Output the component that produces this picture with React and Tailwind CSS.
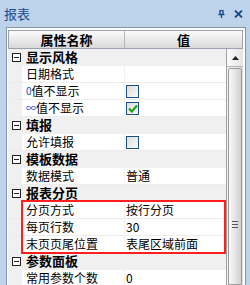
const rows = [
  { cat: '显示风格' },
  { name: '日期格式', value: '' },
  { name: '值不显示', prefix: '0', check: false },
  { name: '值不显示', prefix: '∞', check: true },
  { cat: '填报' },
  { name: '允许填报', check: false },
  { cat: '模板数据' },
  { name: '数据模式', value: '普通' },
  { cat: '报表分页' },
]

const paging = [
  { name: '分页方式', value: '按行分页' },
  { name: '每页行数', value: '30' },
  { name: '末页页尾位置', value: '表尾区域前面' },
]

const tail = [
  { cat: '参数面板' },
  { name: '常用参数个数', value: '0' },
]

function Expander() {
  return (
    <span className="w-[9px] h-[9px] border border-[#222] bg-white flex items-center justify-center">
      <span className="w-[5px] h-px bg-[#222]" />
    </span>
  )
}

function Checkbox({ checked }) {
  return (
    <span className="w-[13px] h-[13px] border border-[#1d4f7f] bg-gradient-to-br from-[#dcdcdc] to-[#fafafa] flex items-center justify-center">
      {checked && (
        <svg width="10" height="9" viewBox="0 0 10 9">
          <path d="M1 4.5 L3.8 7.5 L9 1.5" fill="none" stroke="#1fa31f" strokeWidth="2.2" />
        </svg>
      )}
    </span>
  )
}

function Row({ row }) {
  if (row.cat) {
    return (
      <div className="h-[17px] bg-[#f0f0f0] flex items-center border-b border-[#f0f0f0]">
        <div className="w-[14px] flex justify-center pl-[2px]">
          <Expander />
        </div>
        <span className="pl-[4px] text-[13px] font-bold text-black leading-[16px]">{row.cat}</span>
      </div>
    )
  }
  return (
    <div className="h-[17px] flex border-b border-[#ececec]">
      <div className="w-[14px] bg-[#f0f0f0]" />
      <div className="w-[103px] bg-white pl-[4px] flex items-center text-[12px] leading-[16px] text-black border-r border-[#f0f0f0]">
        {row.prefix && <span className="text-[#1d4fc4] text-[10px]">{row.prefix}</span>}
        {row.name}
      </div>
      <div className="flex-1 bg-white flex items-center text-[12px] leading-[16px] text-black pl-px">
        {row.check !== undefined ? <Checkbox checked={row.check} /> : row.value}
      </div>
    </div>
  )
}

function Scrollbar() {
  return (
    <div className="w-[17px] flex flex-col border-l border-[#a0a0a0] bg-gradient-to-r from-[#f4f4f4] to-[#dcdcdc]">
      <div className="h-[18px] flex items-center justify-center border-b border-[#b5b5b5] bg-gradient-to-r from-[#fafafa] to-[#e4e4e4]">
        <svg width="7" height="4" viewBox="0 0 7 4">
          <path d="M0 4 L3.5 0 L7 4 Z" fill="#222" />
        </svg>
      </div>
      <div className="flex-1 mt-px mx-px border border-[#9c9c9c] rounded-t-[2px] bg-gradient-to-r from-[#f8f8f8] via-[#e6e6e6] to-[#cfcfcf] flex flex-col items-center pt-[152px]">
        <div className="flex flex-col gap-[2px]">
          <span className="w-[6px] h-px bg-[#555]" />
          <span className="w-[6px] h-px bg-[#555]" />
          <span className="w-[6px] h-px bg-[#555]" />
        </div>
      </div>
    </div>
  )
}

export default function App() {
  return (
    <div
      className="w-[250px] h-[285px] overflow-hidden bg-[#bdd3ec] flex flex-col"
      style={{ fontFamily: '"Noto Sans CJK SC", "Liberation Sans", sans-serif' }}
    >
      <div className="h-[27px] flex items-center justify-between pl-[4px] pr-[7px]">
        <span className="text-[13px] text-[#1c4a8c] leading-none">报表</span>
        <div className="flex items-center gap-[9px]">
          <svg width="7" height="8" viewBox="0 0 7 8">
            <path d="M1.5 0.5 H5.5 M2 0.5 V4.5 M5 0.5 V4.5 M0.5 4.5 H6.5 M3.5 4.5 V8" fill="none" stroke="#1c4a8c" strokeWidth="1.4" />
          </svg>
          <svg width="9" height="8" viewBox="0 0 9 8">
            <path d="M1 0.5 L8 7.5 M8 0.5 L1 7.5" stroke="#1c4a8c" strokeWidth="1.8" />
          </svg>
        </div>
      </div>
      <div className="flex-1 flex pl-[6px] pr-[4px] min-h-0">
        <div className="flex-1 border-t border-l border-r border-[#8796aa] bg-white pt-[2px] pl-px pr-[2px] flex flex-col min-h-0">
          <div className="h-[19px] flex border border-[#9aa3ad] bg-gradient-to-b from-[#fbfbfb] to-[#d9d9d9] text-[13px] font-bold text-black leading-[16px]">
            <div className="w-[116px] flex items-center justify-center border-r border-[#b8b8b8]">属性名称</div>
            <div className="flex-1 flex items-center justify-center">值</div>
          </div>
          <div className="flex-1 flex min-h-0">
            <div className="flex-1 flex flex-col">
              {rows.map((r, i) => (
                <Row key={i} row={r} />
              ))}
              <div className="relative">
                {paging.map((r, i) => (
                  <Row key={i} row={r} />
                ))}
                <div className="absolute left-[13px] right-0 top-[-2px] bottom-[-1px] border-2 border-[#ff1f1f]" />
              </div>
              {tail.map((r, i) => (
                <Row key={i} row={r} />
              ))}
            </div>
            <Scrollbar />
          </div>
        </div>
      </div>
    </div>
  )
}
